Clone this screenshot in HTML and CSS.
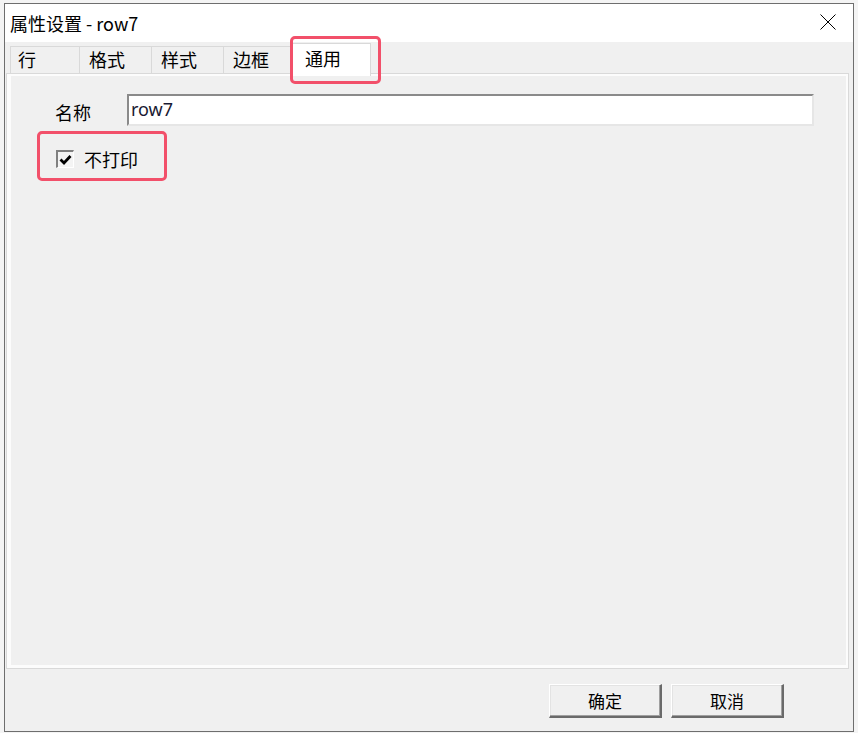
FILE: index.html
```html
<!DOCTYPE html>
<html lang="zh-CN">
<head>
<meta charset="UTF-8">
<meta name="viewport" content="width=device-width, initial-scale=1.0">
<title>属性设置 - row7</title>
<link rel="stylesheet" href="styles.css">
</head>
<body>

<div class="dialog">
    <div class="titlebar">
        <span class="title">属性设置 - row7</span>
        <svg class="close" width="16" height="16" viewBox="0 0 16 16">
            <path d="M0.5 0.5 L15.5 15.5 M15.5 0.5 L0.5 15.5" stroke="#000" stroke-width="1" fill="none"/>
        </svg>
    </div>

    <div class="tabs">
        <div class="tab tab-first">行</div>
        <div class="tab tab-wide">格式</div>
        <div class="tab tab-wide">样式</div>
        <div class="tab">边框</div>
        <div class="tab active">通用</div>
    </div>

    <div class="panel">
        <div class="page">
            <div class="field">
                <span class="field-label">名称</span>
                <div class="input">row7</div>
            </div>
            <div class="check">
                <span class="box">
                    <svg width="13" height="12" viewBox="0 0 13 12">
                        <path d="M1.5 5.5 L5 9 L11.5 2" stroke="#000" stroke-width="2.8" fill="none"/>
                    </svg>
                </span>
                <span>不打印</span>
            </div>
        </div>
    </div>

    <div class="buttons">
        <button class="btn">确定</button>
        <button class="btn">取消</button>
    </div>

    <!-- red highlight marks -->
    <div class="mark mark-tab"></div>
    <div class="mark mark-check"></div>
</div>

</body>
</html>
```

FILE: styles.css
```css
html, body {
    margin: 0;
    padding: 0;
}

body {
    background-color: #f4f4f4;
    padding: 3px 5px 1px 4px;
    font-family: "Noto Sans CJK SC", "Noto Sans", sans-serif;
    color: #000;
}

.dialog {
    position: relative;
    width: 850px;
    height: 729px;
    box-sizing: border-box;
    border: 1px solid #6e6e6e;
    background-color: #f0f0f0;
}

.titlebar {
    height: 38px;
    background-color: #fff;
    display: flex;
    align-items: center;
    justify-content: space-between;
    padding: 0 17px 0 5px;
}

.title {
    font-size: 18px;
    line-height: 22px;
    margin-top: -1px;
}

.close {
    display: block;
    margin-top: -3px;
}

.tabs {
    height: 31px;
    display: flex;
    align-items: flex-end;
    padding-left: 5px;
    position: relative;
    z-index: 1;
}

.tab {
    width: 69px;
    height: 27px;
    box-sizing: border-box;
    border: 1px solid #d9d9d9;
    border-bottom: none;
    border-right: none;
    background-color: #f0f0f0;
    font-size: 18px;
    line-height: 25px;
    padding-left: 9px;
}

.tab-first {
    padding-left: 7px;
}

.tab-wide {
    width: 72px;
}

.active {
    width: 79px;
    height: 33px;
    margin-bottom: -3px;
    background-color: #fff;
    border-right: 1px solid #d9d9d9;
    padding-left: 12px;
    line-height: 29px;
}

.panel {
    margin-left: 1px;
    width: 843px;
    height: 596px;
    box-sizing: border-box;
    border: 1px solid #d9d9d9;
    background-color: #fcfcfc;
    padding: 2px 2px 3px 4px;
}

.page {
    height: 100%;
    background-color: #f0f0f0;
    padding: 18px 0 0 44px;
    box-sizing: border-box;
}

.field {
    display: flex;
    align-items: center;
}

.field-label {
    width: 72px;
    font-size: 18px;
    line-height: 22px;
    padding-top: 4px;
}

.input {
    width: 687px;
    height: 32px;
    box-sizing: border-box;
    background-color: #fff;
    border-top: 2px solid #8a8a8a;
    border-left: 2px solid #8a8a8a;
    border-right: 2px solid #e6e6e6;
    border-bottom: 2px solid #e6e6e6;
    font-family: "Noto Sans", "Noto Sans CJK SC", sans-serif;
    font-size: 18px;
    line-height: 26px;
    padding-left: 2px;
    color: #1a1a33;
}

.check {
    display: flex;
    align-items: center;
    gap: 10px;
    margin-top: 22px;
    margin-left: 1px;
    font-size: 18px;
    line-height: 22px;
}

.box {
    width: 18px;
    height: 18px;
    box-sizing: border-box;
    border-top: 2px solid #808080;
    border-left: 2px solid #808080;
    border-right: 1px solid #fff;
    border-bottom: 1px solid #fff;
    background-color: #f4f4f4;
    display: flex;
    align-items: center;
    justify-content: center;
}

.box svg {
    display: block;
}

.buttons {
    display: flex;
    justify-content: flex-end;
    gap: 9px;
    padding: 15px 69px 0 0;
}

.btn {
    width: 113px;
    height: 34px;
    box-sizing: border-box;
    background-color: #f0f0f0;
    border-top: 1px solid #fff;
    border-left: 1px solid #fff;
    border-right: 2px solid #6a6a6a;
    border-bottom: 2px solid #6a6a6a;
    box-shadow: inset -1px -1px 0 #a0a0a0, inset 1px 1px 0 #e3e3e3;
    font-family: "Noto Sans CJK SC", sans-serif;
    font-size: 17px;
    color: #000;
    padding: 0;
    line-height: 30px;
}

.mark {
    position: absolute;
    box-sizing: border-box;
    border: 3px solid #f2506a;
    border-radius: 5px;
    z-index: 2;
}

.mark-tab {
    left: 285px;
    top: 32px;
    width: 91px;
    height: 48px;
}

.mark-check {
    left: 32px;
    top: 127px;
    width: 130px;
    height: 50px;
}
```
